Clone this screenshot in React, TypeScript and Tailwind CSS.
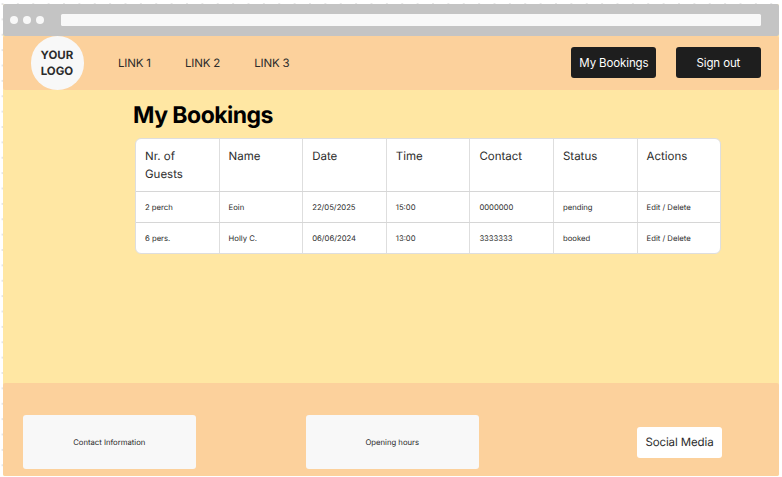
const columns = ['Nr. of Guests', 'Name', 'Date', 'Time', 'Contact', 'Status', 'Actions'];

const bookings = [
  ['2 perch', 'Eoin', '22/05/2025', '15:00', '0000000', 'pending', 'Edit / Delete'],
  ['6 pers.', 'Holly C.', '06/06/2024', '13:00', '3333333', 'booked', 'Edit / Delete'],
];

function BrowserBar() {
  return (
    <div className="flex h-8 shrink-0 items-center rounded-[2px] bg-[#c4c4c4] pl-[7px] pr-[18.5px]">
      <div className="flex gap-[5px]">
        <span className="size-2 rounded-full bg-[#f8f8f8]" />
        <span className="size-2 rounded-full bg-[#f8f8f8]" />
        <span className="size-2 rounded-full bg-[#f8f8f8]" />
      </div>
      <div className="ml-[17px] h-3 flex-1 rounded-[1.5px] bg-[#f8f8f8]" />
    </div>
  );
}

function Header() {
  return (
    <header className="flex h-[53.5px] shrink-0 items-center rounded-[2px] bg-[#fcd19c] pl-[27.6px] pr-[18.5px]">
      <div className="flex size-[53.6px] items-center justify-center rounded-full bg-[#f8f8f8] pr-px pt-[2px] text-center text-[11.5px] font-bold leading-[15.4px]">
        YOUR
        <br />
        LOGO
      </div>
      <nav className="ml-[33.8px] flex gap-[34.3px] pt-[2px] text-[11.5px] tracking-[-0.2px]">
        <a>LINK 1</a>
        <a>LINK 2</a>
        <a>LINK 3</a>
      </nav>
      <div className="ml-auto flex gap-[19.5px] text-[11.5px] tracking-[-0.12px] text-white">
        <button className="h-[31px] w-[85px] rounded-[3px] bg-[#1e1e1e] pt-[2px]">My Bookings</button>
        <button className="h-[31px] w-[85px] rounded-[3px] bg-[#1e1e1e] pt-[2px]">Sign out</button>
      </div>
    </header>
  );
}

function BookingsTable() {
  return (
    <div className="ml-[132px] mt-[8px] w-[586px] overflow-hidden rounded-[6px] border border-[#dedede] bg-white">
      <div className="grid h-[52.5px] grid-cols-[repeat(7,83.6px)] divide-x divide-[#dedede] text-[11.5px] leading-[17.5px]">
        {columns.map((name) => (
          <div key={name} className="pl-[9px] pr-6 pt-[9.5px]">
            {name}
          </div>
        ))}
      </div>
      {bookings.map((row) => (
        <div
          key={row[0]}
          className="grid h-[30.8px] grid-cols-[repeat(7,83.6px)] divide-x divide-[#dedede] border-t border-[#d6d6d6] text-[7.7px]"
        >
          {row.map((value, i) => (
            <div key={i} className="flex items-center whitespace-nowrap pl-[9px] pt-[1.2px]">
              {value}
            </div>
          ))}
        </div>
      ))}
    </div>
  );
}

function Footer() {
  return (
    <footer className="flex h-[93.5px] shrink-0 items-start rounded-[2px] bg-[#fcd19c] pl-5 pt-[32.5px]">
      <div className="flex h-[54px] w-[172.5px] items-center justify-center rounded-[3px] bg-[#f8f8f8] pt-[1.5px] text-[7.7px]">
        Contact Information
      </div>
      <div className="ml-[110.5px] flex h-[54px] w-[172.5px] items-center justify-center rounded-[3px] bg-[#f8f8f8] pt-[1.5px] text-[7.7px]">
        Opening hours
      </div>
      <div className="ml-[158.5px] mt-[11.5px] flex h-[31px] w-[85px] items-center justify-center rounded-[3px] bg-white pt-[2px] text-[11.5px] tracking-[-0.12px]">
        Social Media
      </div>
    </footer>
  );
}

export default function App() {
  return (
    <div className="h-[477px] w-[782px] overflow-hidden bg-white bg-[radial-gradient(circle_at_center,#e2e2e2_0.6px,transparent_1.2px)] bg-[length:15.38px_15.38px] bg-[position:-5.2px_-3.7px] pl-[3px] pt-1 font-['Inter',sans-serif] text-[#2b2b2b] [text-rendering:geometricPrecision]">
      <div className="flex h-[472px] w-[776.4px] flex-col rounded-[2px] bg-[#ffe7a3]">
        <BrowserBar />
        <Header />
        <main className="flex-1 pt-[10px]">
          <h1 className="ml-[130px] text-[23px] font-bold leading-[30px] tracking-[-0.53px] text-black">My Bookings</h1>
          <BookingsTable />
        </main>
        <Footer />
      </div>
    </div>
  );
}
